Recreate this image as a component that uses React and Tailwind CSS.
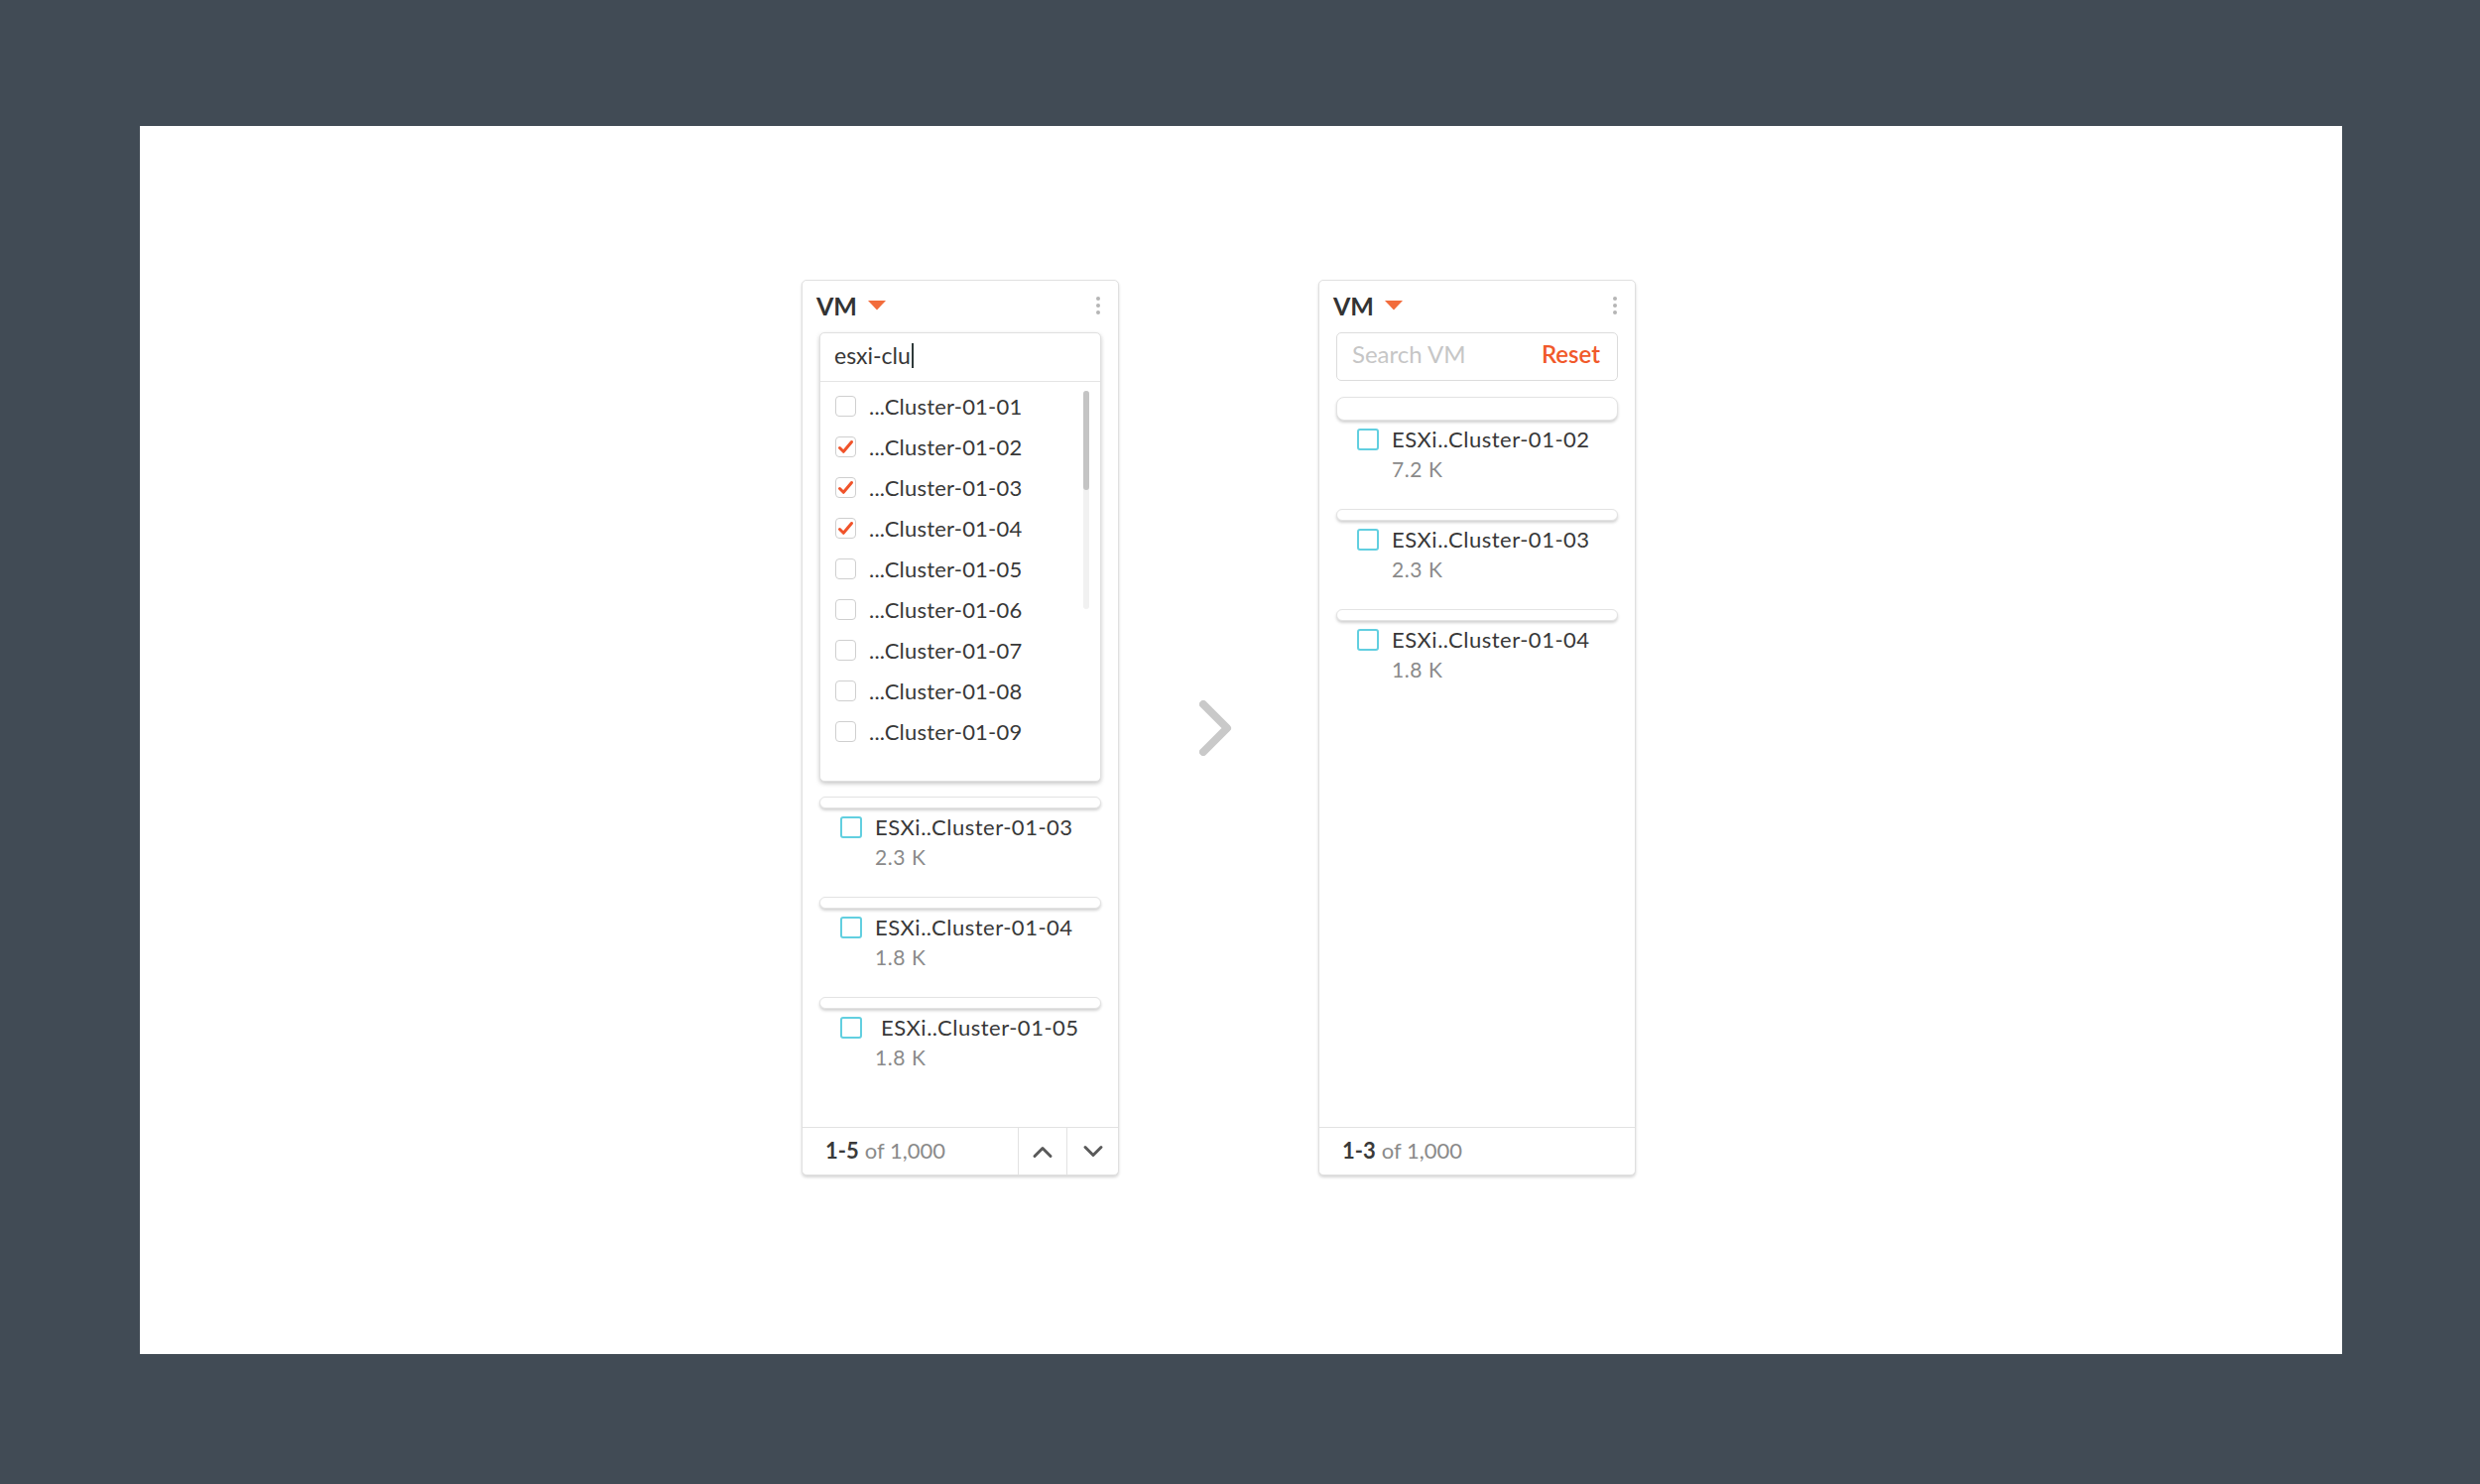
import { Fragment } from 'react'

const searchOptions = ['01', '02', '03', '04', '05', '06', '07', '08', '09'].map((n) => ({
  label: `...Cluster-01-${n}`,
  checked: ['02', '03', '04'].includes(n),
}))

const leftItems = [
  { name: 'ESXi..Cluster-01-03', value: '2.3 K' },
  { name: 'ESXi..Cluster-01-04', value: '1.8 K' },
  { name: 'ESXi..Cluster-01-05', value: '1.8 K', padded: true },
]

const rightItems = [
  { name: 'ESXi..Cluster-01-02', value: '7.2 K', tall: true },
  { name: 'ESXi..Cluster-01-03', value: '2.3 K' },
  { name: 'ESXi..Cluster-01-04', value: '1.8 K' },
]

const Caret = () => (
  <svg width="18" height="10" viewBox="0 0 18 10" aria-hidden="true">
    <path d="M0 0h18L9 9.5z" fill="#f26c3c" />
  </svg>
)

const Kebab = () => (
  <div className="flex flex-col gap-[3px]">
    <span className="h-[4px] w-[4px] rounded-full bg-[#b5b5b5]" />
    <span className="h-[4px] w-[4px] rounded-full bg-[#b5b5b5]" />
    <span className="h-[4px] w-[4px] rounded-full bg-[#b5b5b5]" />
  </div>
)

const CardHeader = () => (
  <div className="flex h-[52px] items-center justify-between pb-[2px] pl-[14px] pr-[18px]">
    <div className="flex items-center gap-[11px]">
      <span className="text-[25px] font-bold leading-none text-[#333]">VM</span>
      <Caret />
    </div>
    <Kebab />
  </div>
)

const Pill = ({ tall }) => (
  <div
    className={
      tall
        ? 'h-[24px] rounded-[8px] border border-[#e3e3e3] bg-white shadow-[0_2px_3px_rgba(0,0,0,0.18)]'
        : 'h-[12px] rounded-full border border-[#e3e3e3] bg-white shadow-[0_2px_3px_rgba(0,0,0,0.18)]'
    }
  />
)

const ClusterItem = ({ item }) => (
  <div>
    <Pill tall={item.tall} />
    <div className="h-[89px] pl-[21px] pt-[8px]">
      <div className="flex items-center gap-[13px]">
        <span className="h-[22px] w-[22px] rounded-[3px] border-2 border-[#62cfe0]" />
        <span
          className={
            item.padded
              ? 'pl-[6px] text-[22px] leading-[22px] tracking-[0.5px] text-[#383838]'
              : 'text-[22px] leading-[22px] tracking-[0.5px] text-[#383838]'
          }
        >
          {item.name}
        </span>
      </div>
      <div className="mt-[8px] pl-[35px] text-[21px] leading-[22px] tracking-[0.6px] text-[#8a8a8a]">{item.value}</div>
    </div>
  </div>
)

const Pager = ({ range, arrows }) => (
  <div className="flex h-[48px] items-stretch border-t border-[#e2e2e2]">
    <div className="flex flex-1 items-center pb-[3px] pl-[23px] text-[22px] text-[#8a8a8a]">
      <span className="font-bold text-[#3a3a3a]">{range}</span>
      <span className="ml-[6px]">of 1,000</span>
    </div>
    {arrows && (
      <Fragment>
        <button type="button" className="flex w-[49px] items-center justify-center border-l border-[#e2e2e2]">
          <svg width="22" height="14" viewBox="0 0 22 14" aria-hidden="true">
            <path d="M3 11.5 11 3.5l8 8" fill="none" stroke="#5a5a5a" strokeWidth="3" strokeLinecap="round" strokeLinejoin="round" />
          </svg>
        </button>
        <button type="button" className="flex w-[52px] items-center justify-center border-l border-[#e2e2e2]">
          <svg width="22" height="14" viewBox="0 0 22 14" aria-hidden="true">
            <path d="M3 2.5 11 10.5l8-8" fill="none" stroke="#5a5a5a" strokeWidth="3" strokeLinecap="round" strokeLinejoin="round" />
          </svg>
        </button>
      </Fragment>
    )}
  </div>
)

const OptionBox = ({ checked }) => (
  <span className="flex h-[21px] w-[21px] items-center justify-center rounded-[4px] border border-[#cfcfcf] bg-white">
    {checked && (
      <svg width="17" height="15" viewBox="0 0 17 15" aria-hidden="true">
        <path d="M2.5 8.5l3.8 3.8L14.5 2.5" fill="none" stroke="#f0532a" strokeWidth="3" strokeLinecap="round" strokeLinejoin="round" />
      </svg>
    )}
  </span>
)

const SearchDropdown = () => (
  <div className="mx-[17px] h-[453px] rounded-[5px] border border-[#e0e0e0] bg-white shadow-[0_2px_4px_rgba(0,0,0,0.22)]">
    <div className="flex h-[49px] items-center border-b border-[#e4e4e4] pb-[4px] pl-[14px] text-[23px] text-[#383838]">
      esxi-clu
      <span className="ml-[1px] h-[25px] w-[2px] bg-[#2f3a3a]" />
    </div>
    <div className="relative pt-[4px]">
      {searchOptions.map((opt) => (
        <div key={opt.label} className="flex h-[41px] items-center gap-[13px] pl-[15px]">
          <OptionBox checked={opt.checked} />
          <span className="text-[22px] tracking-[0.2px] text-[#383838]">{opt.label}</span>
        </div>
      ))}
      <div className="absolute right-[11px] top-[9px] h-[220px] w-[6px] rounded-full bg-[#f1f1f1]">
        <div className="h-[100px] w-[6px] rounded-full bg-[#c4c4c4]" />
      </div>
    </div>
  </div>
)

const FilterSearch = () => (
  <div className="mx-[17px] flex h-[49px] items-center justify-between rounded-[5px] border border-[#dcdcdc] pb-[5px] pl-[15px] pr-[17px]">
    <span className="text-[24px] text-[#c6c6c6]">Search VM</span>
    <span className="text-[24px] font-semibold text-[#f1592a]">Reset</span>
  </div>
)

const Card = ({ children }) => (
  <div className="flex h-[903px] w-[320px] flex-col rounded-[5px] border border-[#e0e0e0] bg-white shadow-[0_2px_3px_rgba(0,0,0,0.16)]">
    {children}
  </div>
)

export default function App() {
  return (
    <div className="h-[1496px] w-[2500px] bg-[#414b55] pl-[141px] pt-[127px] font-['Lato','Open_Sans',sans-serif]">
      <div className="flex h-[1238px] w-[2220px] items-start bg-white pl-[667px] pt-[155px]">
        <Card>
          <CardHeader />
          <SearchDropdown />
          <div className="mx-[17px] mt-[15px] flex-1">
            {leftItems.map((item) => (
              <ClusterItem key={item.name} item={item} />
            ))}
          </div>
          <Pager range="1-5" arrows />
        </Card>

        <div className="flex h-[903px] w-[201px] items-center pl-[81px]">
          <svg width="36" height="56" viewBox="0 0 36 56" aria-hidden="true">
            <path d="M4 4l24 24L4 52" fill="none" stroke="#c9c9c9" strokeWidth="8" strokeLinecap="round" strokeLinejoin="round" />
          </svg>
        </div>

        <Card>
          <CardHeader />
          <FilterSearch />
          <div className="mx-[17px] mt-[16px] flex-1">
            {rightItems.map((item) => (
              <ClusterItem key={item.name} item={item} />
            ))}
          </div>
          <Pager range="1-3" />
        </Card>
      </div>
    </div>
  )
}
